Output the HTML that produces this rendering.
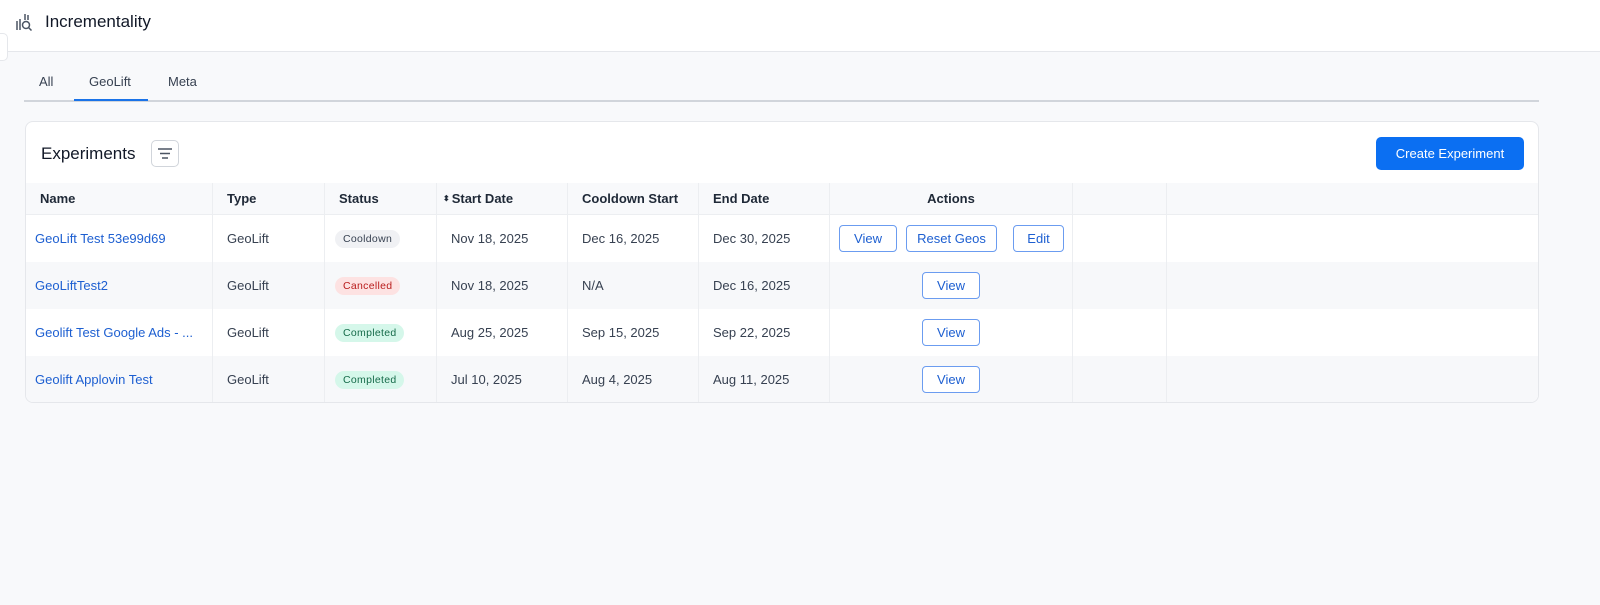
<!DOCTYPE html>
<html><head><style>
*{box-sizing:border-box;margin:0;padding:0}
body{width:1600px;height:605px;background:#f8f9fb;font-family:"Liberation Sans",sans-serif;color:#1f2937;position:relative;overflow:hidden}
.top{position:absolute;left:0;top:0;width:1600px;height:52px;background:#fff;border-bottom:1px solid #e5e7eb}
.title{position:absolute;left:45px;top:12px;font-size:17px;color:#111827}
.tabs{position:absolute;left:24px;top:72px;width:1515px;height:30px;border-bottom:2px solid #d1d5db}
.tab{position:absolute;top:2px;font-size:13px;color:#374151}
.card{position:absolute;left:25px;top:121px;width:1514px;height:282px;background:#fff;border:1px solid #e5e7eb;border-radius:8px;overflow:hidden}
.exp{position:absolute;left:15px;top:22px;font-size:17px;color:#111827}
.fbtn{position:absolute;left:125px;top:18px;width:28px;height:27px;border:1px solid #d1d5db;border-radius:5px}
.cbtn{position:absolute;left:1350px;top:15px;width:148px;height:33px;background:#0b6ff2;border-radius:5px;color:#fff;font-size:13px;text-align:center;line-height:33px}
.row{position:absolute;left:0;width:1514px}
.c{position:absolute;top:0;height:100%;border-left:1px solid #eceef1;font-size:13px;display:flex;align-items:center;padding-left:14px;color:#374151}
.h .c{font-weight:bold;color:#1f2937}
a{color:#1d5fd1;text-decoration:none}
.b{display:inline-block;font-size:10.5px;padding:3px 8px;border-radius:10px;letter-spacing:.3px}
.btn{position:absolute;top:10px;height:27px;border:1px solid #6b9cf0;border-radius:4px;color:#1d5fd1;font-size:13px;text-align:center;line-height:25px;background:#fff}
</style></head><body>
<div class="top">
<svg style="position:absolute;left:16px;top:13px" width="18" height="18" viewBox="0 0 18 18" fill="none" stroke="#4b5563" stroke-width="1.5"><path d="M1 8v9M4 6v11M9 1v6M12 2v5"/><circle cx="10" cy="12" r="3.5"/><path d="M12.5 14.5l3 3"/></svg>
<div class="title">Incrementality</div></div>
<div style="position:absolute;left:-8px;top:33px;width:16px;height:28px;border:1px solid #e5e7eb;border-radius:5px;background:#fff"></div>
<div class="tabs">
<div class="tab" style="left:15px">All</div>
<div class="tab" style="left:65px">GeoLift</div>
<div class="tab" style="left:144px">Meta</div>
<div style="position:absolute;left:50px;top:27px;width:74px;height:2px;background:#1a73e8"></div>
</div>
<div class="card">
<div class="exp">Experiments</div>
<div class="fbtn"><svg width="26" height="25" viewBox="0 0 26 25" stroke="#4b5563" stroke-width="1.5"><path d="M6 8h14M8 12.5h10M10 17h6"/></svg></div>
<div class="cbtn">Create Experiment</div>
<div class="row h" style="top:61px;height:32px;background:#f8f9fb;border-bottom:1px solid #eceef1">
<div class="c" style="left:0;width:186px;border:0">Name</div><div class="c" style="left:186px;width:112px">Type</div><div class="c" style="left:298px;width:112px">Status</div><div class="c" style="left:410px;width:131px;padding-left:6px"><span style="font-size:8px;margin-right:2px">⬍</span>Start Date</div><div class="c" style="left:541px;width:131px">Cooldown Start</div><div class="c" style="left:672px;width:131px">End Date</div><div class="c" style="left:803px;width:243px;justify-content:center;padding:0">Actions</div><div class="c" style="left:1046px;width:94px"></div><div class="c" style="left:1140px;width:374px"></div>
</div>
<div class="row" style="top:93px;height:47px;background:#fff">
<div class="c" style="left:0;width:186px;border:0;padding-left:9px"><a>GeoLift Test 53e99d69</a></div><div class="c" style="left:186px;width:112px">GeoLift</div><div class="c" style="left:298px;width:112px;padding-left:10px"><span class="b" style="background:#f0f1f4;color:#374151">Cooldown</span></div><div class="c" style="left:410px;width:131px">Nov 18, 2025</div><div class="c" style="left:541px;width:131px">Dec 16, 2025</div><div class="c" style="left:672px;width:131px">Dec 30, 2025</div><div class="c" style="left:803px;width:243px"><div class="btn" style="left:9px;width:58px">View</div><div class="btn" style="left:76px;width:91px">Reset Geos</div><div class="btn" style="left:183px;width:51px">Edit</div></div><div class="c" style="left:1046px;width:94px"></div><div class="c" style="left:1140px;width:374px"></div>
</div>
<div class="row" style="top:140px;height:47px;background:#f7f8fa">
<div class="c" style="left:0;width:186px;border:0;padding-left:9px"><a>GeoLiftTest2</a></div><div class="c" style="left:186px;width:112px">GeoLift</div><div class="c" style="left:298px;width:112px;padding-left:10px"><span class="b" style="background:#fde2e2;color:#b91c1c">Cancelled</span></div><div class="c" style="left:410px;width:131px">Nov 18, 2025</div><div class="c" style="left:541px;width:131px">N/A</div><div class="c" style="left:672px;width:131px">Dec 16, 2025</div><div class="c" style="left:803px;width:243px"><div class="btn" style="left:92px;width:58px">View</div></div><div class="c" style="left:1046px;width:94px"></div><div class="c" style="left:1140px;width:374px"></div>
</div>
<div class="row" style="top:187px;height:47px;background:#fff">
<div class="c" style="left:0;width:186px;border:0;padding-left:9px"><a>Geolift Test Google Ads - ...</a></div><div class="c" style="left:186px;width:112px">GeoLift</div><div class="c" style="left:298px;width:112px;padding-left:10px"><span class="b" style="background:#d5f7ea;color:#166b4a">Completed</span></div><div class="c" style="left:410px;width:131px">Aug 25, 2025</div><div class="c" style="left:541px;width:131px">Sep 15, 2025</div><div class="c" style="left:672px;width:131px">Sep 22, 2025</div><div class="c" style="left:803px;width:243px"><div class="btn" style="left:92px;width:58px">View</div></div><div class="c" style="left:1046px;width:94px"></div><div class="c" style="left:1140px;width:374px"></div>
</div>
<div class="row" style="top:234px;height:47px;background:#f7f8fa">
<div class="c" style="left:0;width:186px;border:0;padding-left:9px"><a>Geolift Applovin Test</a></div><div class="c" style="left:186px;width:112px">GeoLift</div><div class="c" style="left:298px;width:112px;padding-left:10px"><span class="b" style="background:#d5f7ea;color:#166b4a">Completed</span></div><div class="c" style="left:410px;width:131px">Jul 10, 2025</div><div class="c" style="left:541px;width:131px">Aug 4, 2025</div><div class="c" style="left:672px;width:131px">Aug 11, 2025</div><div class="c" style="left:803px;width:243px"><div class="btn" style="left:92px;width:58px">View</div></div><div class="c" style="left:1046px;width:94px"></div><div class="c" style="left:1140px;width:374px"></div>
</div>
</div>
</body></html>
